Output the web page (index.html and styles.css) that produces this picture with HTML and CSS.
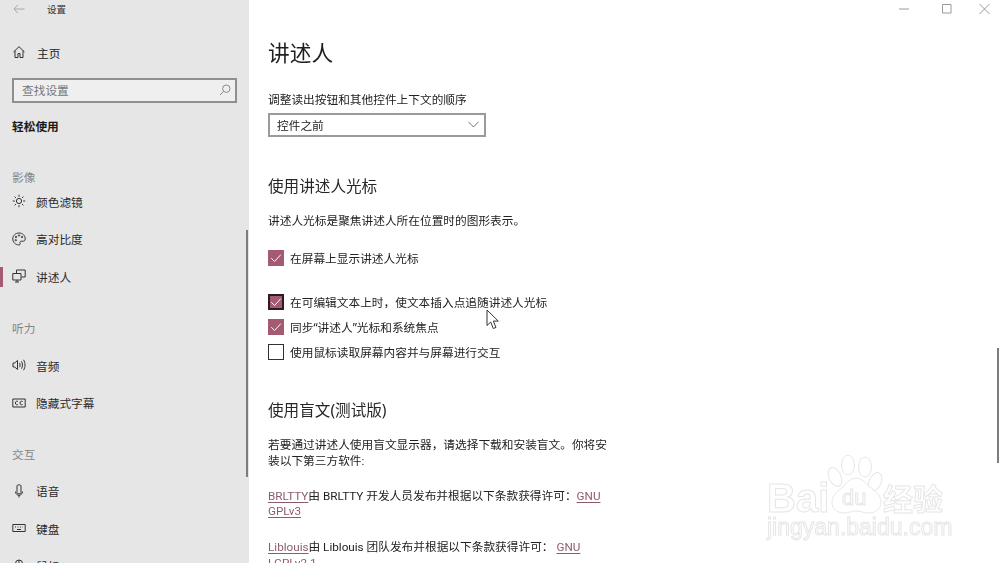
FILE: index.html
```html
<!DOCTYPE html>
<html lang="zh-CN">
<head>
<meta charset="utf-8">
<title>设置</title>
<link rel="stylesheet" href="styles.css">
</head>
<body>
<div class="app">
  <aside class="side">
    <div class="titlebar">
      <svg class="back" width="12" height="10" viewBox="0 0 12 10"><path d="M5 .8 1 5l4 4.200M1 5h10.500"/></svg>
      <span class="apptitle">设置</span>
    </div>
    <div class="home">
      <svg class="ico" width="14" height="14" viewBox="0 0 14 14"><path d="M1.500 7 7 1.700 12.500 7M3 5.700V12.500h3V8.500h2v4h3V5.700"/></svg>
      <span>主页</span>
    </div>
    <div class="search">
      <span>查找设置</span>
      <svg class="mag" width="12" height="12" viewBox="0 0 12 12"><circle cx="7.300" cy="4.700" r="3.700"/><path d="M4.600 7.400 1 11"/></svg>
    </div>
    <div class="cat">轻松使用</div>
    <div class="group first">影像</div>
    <div class="item">
      <svg class="ico" width="14" height="14" viewBox="0 0 14 14"><circle cx="7" cy="7" r="2.600"/><path d="M7 .8v2M7 11.200v2M.8 7h2M11.200 7h2M2.600 2.600 4 4M10 10l1.400 1.400M2.600 11.400 4 10M10 4l1.400-1.400"/></svg>
      <span>颜色滤镜</span>
    </div>
    <div class="item">
      <svg class="ico" width="14" height="14" viewBox="0 0 14 14"><path d="M7 1C3.400 1 .8 3.600.8 6.900c0 3.400 2.700 6 6 6 1.300 0 1.700-.8 1.300-1.700-.5-1.100.1-2 1.300-2h2c1 0 1.800-.8 1.800-2.200C13.200 3.500 10.600 1 7 1z"/><circle cx="4" cy="5" r=".7"/><circle cx="7" cy="3.500" r=".7"/><circle cx="10" cy="5" r=".7"/><circle cx="3.800" cy="8.200" r=".7"/></svg>
      <span>高对比度</span>
    </div>
    <div class="item active">
      <svg class="ico" width="14" height="14" viewBox="0 0 14 14"><path d="M4.500 4V1h8.700v7H9.500M.8 4.500h8.200v6.500H.8zM5 11v2M3 13h4"/></svg>
      <span>讲述人</span>
    </div>
    <div class="group g2">听力</div>
    <div class="item">
      <svg class="ico" width="14" height="14" viewBox="0 0 14 14"><path d="M1 5v4h1.700L5.500 11.500v-9L2.700 5zM7.500 4.800c.8 1.300.8 3.100 0 4.400M9.500 3.300c1.300 2.200 1.300 5.200 0 7.400M11.500 1.800c2 3.100 2 7.300 0 10.400"/></svg>
      <span>音频</span>
    </div>
    <div class="item">
      <svg class="ico" width="14" height="14" viewBox="0 0 14 14"><path d="M.8 3h12.400v8H.8zM6 5.600C5 4.700 3.400 5.200 3.400 7S5 9.300 6 8.400M10.600 5.600C9.600 4.700 8 5.200 8 7s1.600 2.300 2.600 1.400"/></svg>
      <span>隐藏式字幕</span>
    </div>
    <div class="group">交互</div>
    <div class="item">
      <svg class="ico" width="14" height="14" viewBox="0 0 14 14"><path d="M5 1.800c0-1.400 4-1.400 4 0v7c0 1.400-4 1.400-4 0zM3.500 7.500c0 5 7 5 7 0M7 11v2.500"/></svg>
      <span>语音</span>
    </div>
    <div class="item">
      <svg class="ico" width="14" height="14" viewBox="0 0 14 14"><path d="M.8 3.500h12.400v7H.8zM5 8.500h4M3 6h1M5.500 6h1M8 6h1M10.500 6h.5"/></svg>
      <span>键盘</span>
    </div>
    <div class="item">
      <svg class="ico" width="14" height="14" viewBox="0 0 14 14"><rect x="3.500" y="1" width="7" height="12" rx="3.500"/><path d="M7 1v5M3.500 6h7"/></svg>
      <span>鼠标</span>
    </div>
    <div class="sidebar-thumb"></div>
  </aside>

  <main class="main">
    <div class="winctl">
      <svg width="100" height="12" viewBox="0 0 100 12"><path d="M0 6h10M43.500 1.500h8.500v8.500h-8.500zM80.500 1l10 10M90.500 1l-10 10"/></svg>
    </div>
    <h1 class="title">讲述人</h1>
    <div class="label">调整读出按钮和其他控件上下文的顺序</div>
    <div class="select">
      <span>控件之前</span>
      <svg width="11" height="7" viewBox="0 0 11 7"><path d="M.5.800 5.500 6l5-5.200"/></svg>
    </div>
    <h2 class="section s1">使用讲述人光标</h2>
    <p class="text desc">讲述人光标是聚焦讲述人所在位置时的图形表示。</p>
    <div class="check c1"><span class="box on"><svg width="16" height="16" viewBox="0 0 16 16"><path d="M3.300 8.200 6.500 11.500 12.800 4.700"/></svg></span>在屏幕上显示讲述人光标</div>
    <div class="check c2"><span class="box on focus"><svg width="16" height="16" viewBox="0 0 16 16"><path d="M3.300 8.200 6.500 11.500 12.800 4.700"/></svg></span>在可编辑文本上时，使文本插入点追随讲述人光标</div>
    <div class="check c3"><span class="box on"><svg width="16" height="16" viewBox="0 0 16 16"><path d="M3.300 8.200 6.500 11.500 12.800 4.700"/></svg></span>同步“讲述人”光标和系统焦点</div>
    <div class="check c3"><span class="box"></span>使用鼠标读取屏幕内容并与屏幕进行交互</div>
    <h2 class="section s2">使用盲文(测试版)</h2>
    <p class="text para p1">若要通过讲述人使用盲文显示器，请选择下载和安装盲文。你将安装以下第三方软件:</p>
    <p class="text para p2"><a class="link">BRLTTY</a>由 BRLTTY 开发人员发布并根据以下条款获得许可：<a class="link">GNU GPLv3</a></p>
    <p class="text para p3"><a class="link">Liblouis</a>由 Liblouis 团队发布并根据以下条款获得许可： <a class="link">GNU LGPLv2.1</a></p>
    <div class="main-thumb"></div>
  </main>
</div>

<svg class="cursor" width="14" height="21" viewBox="0 0 14 21"><path d="M1 1v15.500l3.700-3.500 2.600 6.500 2.700-1.100-2.700-6.300h5z"/></svg>

<svg class="mark" width="190" height="100" viewBox="0 0 190 100">
  <g class="paw">
    <ellipse cx="69" cy="22" rx="6" ry="10" transform="rotate(-25 69 22)"/>
    <ellipse cx="82" cy="10" rx="6.500" ry="10"/>
    <ellipse cx="99" cy="12" rx="6.500" ry="10"/>
    <ellipse cx="109" cy="27" rx="6" ry="10" transform="rotate(25 109 27)"/>
    <path d="M90 23c-6 0-9 5-13 9-5 4-11 8-11 15 0 7 5 11 12 11 5 0 8-2 12-2s8 2 13 2c7 0 12-4 12-11 0-7-6-11-11-15-5-4-8-9-14-9z"/>
  </g>
  <text class="mk-big" x="1" y="57">Bai</text>
  <text class="mk-du" x="76" y="50">du</text>
  <text class="mk-cn" x="117" y="55">经验</text>
  <text class="mk-url" x="1" y="80">jingyan.baidu.com</text>
</svg>
</body>
</html>
```

FILE: styles.css
```css
* { box-sizing: border-box; }
html, body { margin: 0; height: 563px; overflow: hidden; background: #fff; }
body {
  font-family: "Noto Sans", "Noto Sans CJK SC", sans-serif;
  font-size: 11.700px;
  color: #222;
}
.app { display: flex; height: 563px; overflow: hidden; filter: blur(0.3px); }

/* Sidebar */
.side {
  position: relative;
  flex: 0 0 249px;
  height: 563px;
  overflow: hidden;
  background: #e6e6e6;
}
.titlebar { display: flex; align-items: center; height: 18px; padding-left: 13px; }
.back { fill: none; stroke: #a8a8a8; stroke-width: 1; }
.apptitle { margin-left: 22px; font-size: 9.500px; color: #333; }
.home { display: flex; align-items: center; height: 30px; margin-top: 19px; padding-left: 12px; }
.home span { margin-left: 11px; }
.ico { flex: none; fill: none; stroke: #333; stroke-width: 1; }
.search {
  display: flex;
  align-items: center;
  justify-content: space-between;
  width: 225px;
  height: 25px;
  margin: 11px 0 0 12px;
  padding: 0 4px 2px 8px;
  background: #efefef;
  border: 2px solid #8f8f8f;
  color: #767676;
}
.mag { fill: none; stroke: #8a8a8a; stroke-width: 1; }
.cat { height: 20px; margin: 13px 0 0 12px; line-height: 20px; font-weight: 700; color: #1a1a1a; }
.group { height: 36.500px; margin-top: 14px; padding-left: 12px; line-height: 37.500px; color: #858585; }
.group.g2 { margin-top: 15px; }
.group.first { height: 11.500px; margin-top: 35px; line-height: 12.500px; }
.item { position: relative; display: flex; align-items: center; height: 37.500px; padding-left: 12px; color: #2b2b2b; }
.item span { margin-left: 10px; }
.item.active::before {
  content: "";
  position: absolute;
  left: 0;
  top: 9px;
  width: 3px;
  height: 20px;
  background: #a45a70;
}
.sidebar-thumb {
  position: absolute;
  left: 246px;
  top: 230px;
  width: 2px;
  height: 247px;
  background: #7d7d7d;
}

/* Main */
.main { position: relative; flex: 1; height: 563px; overflow: hidden; padding: 38px 0 0 19px; }
.winctl { position: absolute; left: 650px; top: 3px; height: 12px; line-height: 0; }
.winctl svg { fill: none; stroke: #9a9a9a; stroke-width: 1; }
.title { height: 30px; margin: 0; font-size: 21.700px; font-weight: 400; line-height: 30px; color: #1f1f1f; }
.label { height: 16px; margin-top: 23px; line-height: 16px; }
.select {
  display: flex;
  align-items: center;
  justify-content: space-between;
  width: 218px;
  height: 24px;
  margin-top: 6px;
  padding: 0 5px 2px 7px;
  border: 2px solid #9a9a9a;
}
.select svg { fill: none; stroke: #777; stroke-width: 1; }
.section { height: 22px; margin: 0; font-size: 15.600px; font-weight: 400; line-height: 22px; color: #262626; }
.s1 { margin-top: 38px; }
.s2 { margin-top: 37px; }
.text { margin: 0; line-height: 16px; }
.desc { height: 16px; margin-top: 15px; }
.check { display: flex; align-items: center; height: 20px; padding-bottom: 2px; }
.c1 { margin-top: 20px; }
.c2 { margin-top: 24px; }
.c3 { margin-top: 5px; }
.box {
  flex: none;
  width: 16px;
  height: 16px;
  margin: 2px 6px 0 0;
  border: 1.500px solid #333;
  background: #fff;
  line-height: 0;
}
.box.on { border: 0; background: #a45a70; }
.box.focus { border: 2px solid #2a1c22; }
.box svg { fill: none; stroke: #fff; stroke-width: 1; }
.box.focus svg { margin: -2px; }
.para { width: 342px; line-height: 15.800px; font-family: Roboto, "Noto Sans CJK SC", sans-serif; }
.p1 { margin-top: 17px; }
.p2 { margin-top: 19px; }
.p3 { margin-top: 20px; }
.link { color: #8e5a6f; text-decoration: underline; text-underline-offset: 2px; }
.main-thumb {
  position: absolute;
  left: 748px;
  top: 348px;
  width: 2px;
  height: 115px;
  background: #7d7d7d;
}

/* Overlays */
.cursor {
  position: absolute;
  left: 486px;
  top: 309px;
  fill: #fff;
  stroke: #333;
  stroke-width: 1;
}
.mark { position: absolute; left: 766px; top: 455px; }
.paw { fill: #fff; stroke: #e6e6e6; stroke-width: 1; }
.mark text { fill: #fff; stroke: #e6e6e6; stroke-width: 1; font-family: "Liberation Sans", sans-serif; }
.mark .mk-big { font-size: 40px; font-weight: 700; }
.mark .mk-du { font-size: 22px; }
.mark .mk-cn { font-size: 30px; font-family: "Noto Sans CJK SC", sans-serif; font-weight: 700; }
.mark .mk-url { font-size: 23px; }
```
